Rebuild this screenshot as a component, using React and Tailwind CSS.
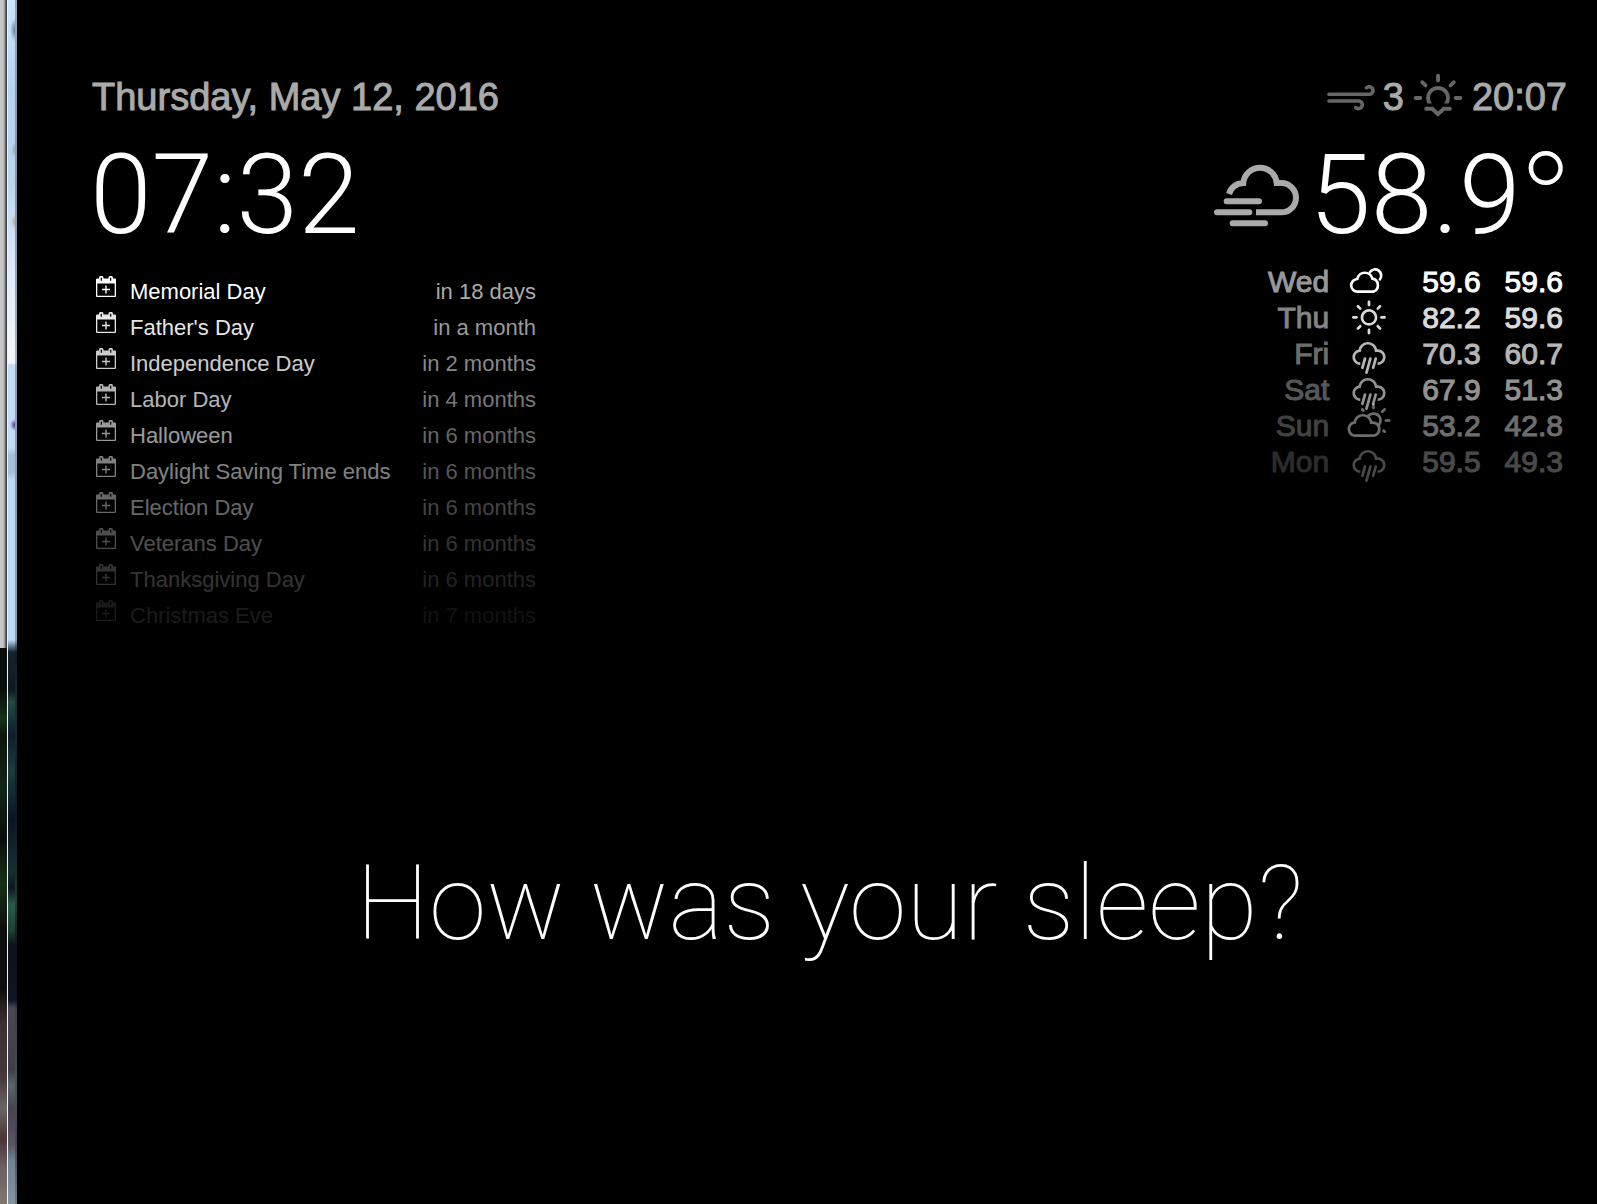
import React from "react";
import { WiStrongWind, WiSunset, WiDaySunny, WiRain, WiDayCloudy } from "react-icons/wi";

const EVENTS = [
  ["Memorial Day", "in 18 days"],
  ["Father's Day", "in a month"],
  ["Independence Day", "in 2 months"],
  ["Labor Day", "in 4 months"],
  ["Halloween", "in 6 months"],
  ["Daylight Saving Time ends", "in 6 months"],
  ["Election Day", "in 6 months"],
  ["Veterans Day", "in 6 months"],
  ["Thanksgiving Day", "in 6 months"],
  ["Christmas Eve", "in 7 months"],
];

const FORECAST = [
  ["Wed", Cloudy, "59.6", "59.6"],
  ["Thu", WiDaySunny, "82.2", "59.6"],
  ["Fri", WiRain, "70.3", "60.7"],
  ["Sat", WiRain, "67.9", "51.3"],
  ["Sun", WiDayCloudy, "53.2", "42.8"],
  ["Mon", WiRain, "59.5", "49.3"],
];

function CalendarPlus() {
  return (
    <svg viewBox="0 0 20 21" className="h-[21px] w-5" aria-hidden="true">
      <path
        fill="currentColor"
        fillRule="evenodd"
        d="M1 2.500h2V2a2 2 0 0 1 4.500 0v.5h5V2A2 2 0 0 1 17 2v.5h2a1 1 0 0 1 1 1V20a1 1 0 0 1-1 1H1a1 1 0 0 1-1-1V3.500a1 1 0 0 1 1-1zM1.300 7.500v12.200h17.400V7.500zM4.700 1.700v3h1.200v-3zM14.100 1.700v3h1.200v-3z"
      />
      <path d="M10 9.500v8M6 13.500h8" stroke="currentColor" strokeWidth="1.400" fill="none" />
    </svg>
  );
}

function Cloudy({ className }) {
  return (
    <svg viewBox="0 0 144 144" className={className} fill="none" stroke="currentColor" strokeWidth="8" strokeLinecap="round" aria-hidden="true">
      <path d="M38 101a19 19 0 0 1-1-38a23 23 0 0 1 45-1a20 20 0 0 1 2 39z" strokeLinejoin="round" />
      <path d="M75 42A18 18 0 1 1 105 64" />
    </svg>
  );
}

function CloudFog({ className }) {
  return (
    <svg viewBox="42 314 255 189" className={className} fill="none" stroke="currentColor" strokeWidth="18" aria-hidden="true">
      <path d="M87 404Q97 373 130 371A50.200 50.200 0 0 1 230 371H244A44 44 0 0 1 244 459H168" />
      <path d="M80 426H177M51 459H148M98 492H195" strokeLinecap="round" />
    </svg>
  );
}

function WindowEdge() {
  return (
    <div className="flex w-[17px] shrink-0" aria-hidden="true">
      <div className="flex w-[7px] flex-col bg-[#0c0f0c]">
        <div className="h-[648px] bg-[linear-gradient(to_right,#c9c9c9_0,#bdbdbd_4px,#777_5px,#2a2a33_7px)]" />
        <div className="flex-1 bg-[linear-gradient(to_bottom,#0a0d0b_0,#0a0d0b_40px,#16301a_70px,#0c140d_90px,#12241a_140px,#0b0d0b_190px,#173018_235px,#0d0f0d_280px,#0d0d0d_340px,#3b302d_375px,#453a38_430px,#6b6562_460px,#4a3538_490px,#6b6062_520px,#81756f_556px)]" />
      </div>
      <div className="w-px bg-[#eef3f6]" />
      <div className="w-[7px] bg-[radial-gradient(ellipse_5px_12px_at_7px_30px,#5f7d9c,transparent),radial-gradient(ellipse_4px_8px_at_7px_150px,#85b5ae,transparent),radial-gradient(ellipse_4px_8px_at_7px_222px,#b9a99a,transparent),radial-gradient(ellipse_5px_6px_at_7px_425px,#4a3580,transparent),linear-gradient(to_bottom,#cfe5fb_0,#b6d3f2_90px,#bcd5ee_180px,#deebf8_270px,#f2f8fd_363px,#c3dbf5_365px,#c3dbf5_448px,#a5bdd6_455px,#a5bdd6_472px,#bcd9f6_480px,#bcd9f6_640px,#16222c_652px,#0e1820_690px,#224a44_702px,#0e1c2a_735px,#1c3c3a_770px,#0a1420_820px,#16302f_870px,#0d1720_888px,#2c5a4b_905px,#1f4034_930px,#0b121c_945px,#0d1520_1000px,#484854_1008px,#3e3e4a_1070px,#59656f_1085px,#45434f_1110px,#5a5763_1145px,#6f828f_1160px,#8493a0_1204px)]" />
      <div className="w-0.5 bg-[linear-gradient(to_bottom,#8fa5bb_0,#8296ac_200px,#a9b6c2_363px,#8a9db3_366px,#869db6_640px,#101a22_652px,#18302f_702px,#0d1822_820px,#1f3f38_905px,#0b121a_945px,#0d141c_1000px,#3a3c46_1008px,#46505a_1085px,#43444f_1140px,#6a7985_1204px)]" />
    </div>
  );
}

export default function App() {
  return (
    <div className="flex min-h-screen bg-black font-['Liberation_Sans',Arial,sans-serif] text-white">
      <WindowEdge />
      <main className="flex flex-1 flex-col pt-[75px] pr-[30px] pl-[75px]">
        <div className="flex items-start justify-between">
          <section>
            <p className="text-[38px] leading-[44px] text-[#aaa] [-webkit-text-stroke:1px]">Thursday, May 12, 2016</p>
            <p className="mt-3 -ml-0.5 font-[Roboto,sans-serif] text-[111px] leading-[128px] font-light">07:32</p>
            <table className="mt-[15px] w-[444px] text-[22px] leading-9">
              <tbody>
                {EVENTS.map(([name, when], i) => (
                  <tr key={name} style={{ opacity: 1 - i / EVENTS.length }}>
                    <td className="w-[38px] pt-0.5 pl-1 align-top">
                      <CalendarPlus />
                    </td>
                    <td>{name}</td>
                    <td className="text-right text-[#aaa]">{when}</td>
                  </tr>
                ))}
              </tbody>
            </table>
          </section>

          <section className="flex flex-col items-end">
            <div className="flex items-center text-[38px] leading-[44px] text-[#aaa]">
              <WiStrongWind className="-my-2 mr-0.5 size-[60px] text-[#666]" />
              <span className="[-webkit-text-stroke:1px]">3</span>
              <WiSunset className="-my-3 mx-1 size-[60px] text-[#666]" />
              <span className="[-webkit-text-stroke:1px]">20:07</span>
            </div>
            <div className="mt-3 -mr-1 flex items-center">
              <CloudFog className="mr-2.5 h-[63px] w-[85px] text-[#aaa]" />
              <span className="font-[Roboto,sans-serif] text-[111px] leading-[128px] font-light">
                58.9<span className="font-[Inter,sans-serif] leading-none font-extralight">°</span>
              </span>
            </div>
            <table className="mt-[5px] text-[30px] leading-9">
              <tbody>
                {FORECAST.map(([day, Icon, high, low], i) => (
                  <tr key={day} style={{ opacity: 1 - i / 7 }}>
                    <td className="text-right text-[#999] [-webkit-text-stroke:1px]">{day}</td>
                    <td className="pl-4">
                      <Icon className="-my-2 size-12" />
                    </td>
                    <td className="pl-[29px] [-webkit-text-stroke:1px]">{high}</td>
                    <td className="pr-1 pl-6 [-webkit-text-stroke:1px]">{low}</td>
                  </tr>
                ))}
              </tbody>
            </table>
          </section>
        </div>
        <h1 className="mt-[206px] text-center font-[Roboto,sans-serif] text-[104px] leading-[128px] font-thin">
          How was your sleep?
        </h1>
      </main>
    </div>
  );
}
